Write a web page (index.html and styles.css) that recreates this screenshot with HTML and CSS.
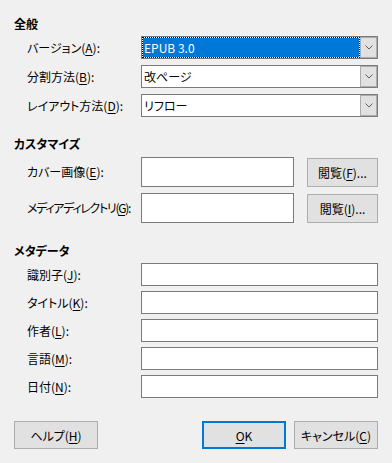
FILE: index.html
```html
<!DOCTYPE html>
<html lang="ja">
<head>
  <meta charset="UTF-8" />
  <meta name="viewport" content="width=device-width, initial-scale=1.0" />
  <title>EPUB エクスポート</title>
  <link rel="stylesheet" href="styles.css">
</head>
<body>
  <div class="dialog">
    <!-- 全般 -->
    <div class="section general">
      <div class="section-title">全般</div>
      <div class="rows combo-rows">
        <label class="row-label">バージョン(<u>A</u>):</label>
        <div class="combo">
          <span class="combo-value selected">EPUB 3.0</span>
          <span class="combo-btn"><svg width="8" height="5" viewBox="0 0 8 5"><path d="M0.5 0.5 L4 4 L7.5 0.5" fill="none" stroke="#606060" stroke-width="1"/></svg></span>
        </div>

        <label class="row-label">分割方法(<u>B</u>):</label>
        <div class="combo">
          <span class="combo-value">改ページ</span>
          <span class="combo-btn"><svg width="8" height="5" viewBox="0 0 8 5"><path d="M0.5 0.5 L4 4 L7.5 0.5" fill="none" stroke="#606060" stroke-width="1"/></svg></span>
        </div>

        <label class="row-label">レイアウト方法(<u>D</u>):</label>
        <div class="combo">
          <span class="combo-value">リフロー</span>
          <span class="combo-btn"><svg width="8" height="5" viewBox="0 0 8 5"><path d="M0.5 0.5 L4 4 L7.5 0.5" fill="none" stroke="#606060" stroke-width="1"/></svg></span>
        </div>
      </div>
    </div>

    <!-- カスタマイズ -->
    <div class="section custom">
      <div class="section-title">カスタマイズ</div>
      <div class="rows path-rows">
        <label class="row-label">カバー画像(<u>E</u>):</label>
        <input class="field tall" type="text" />
        <button class="btn browse">閲覧(<u>F</u>)...</button>

        <label class="row-label narrow">メディアディレクトリ(<u>G</u>):</label>
        <input class="field tall" type="text" />
        <button class="btn browse">閲覧(<u>I</u>)...</button>
      </div>
    </div>

    <!-- メタデータ -->
    <div class="section meta">
      <div class="section-title">メタデータ</div>
      <div class="rows meta-rows">
        <label class="row-label">識別子(<u>J</u>):</label>
        <input class="field" type="text" />
        <label class="row-label">タイトル(<u>K</u>):</label>
        <input class="field" type="text" />
        <label class="row-label">作者(<u>L</u>):</label>
        <input class="field" type="text" />
        <label class="row-label">言語(<u>M</u>):</label>
        <input class="field" type="text" />
        <label class="row-label">日付(<u>N</u>):</label>
        <input class="field" type="text" />
      </div>
    </div>

    <div class="footer">
      <button class="btn">ヘルプ(<u>H</u>)</button>
      <button class="btn default"><u>O</u>K</button>
      <button class="btn">キャンセル(<u>C</u>)</button>
    </div>
  </div>
</body>
</html>
```

FILE: styles.css
```css
body {
  margin: 0;
  background: #f0f0f0;
  font-family: "Noto Sans CJK JP", "Noto Sans", sans-serif;
  font-size: 12px;
  color: #000;
  font-feature-settings: "palt";
}
.dialog {
  width: 392px;
  box-sizing: border-box;
  padding: 16px 14px 0;
}
.section-title {
  font-weight: bold;
  height: 16px;
  line-height: 16px;
}
.custom {
  margin-top: 19px;
}
.meta {
  margin-top: 20px;
}
.rows {
  display: grid;
  grid-template-columns: 114px 1fr;
  align-items: center;
  padding-left: 13px;
}
.row-label {
  line-height: 16px;
  white-space: nowrap;
}
.row-label.narrow {
  letter-spacing: -1.3px;
}
u {
  text-decoration-thickness: 1px;
  text-underline-offset: 2px;
}
.combo-rows {
  margin-top: 4px;
  row-gap: 6px;
}
.combo {
  display: flex;
  height: 23px;
  box-sizing: border-box;
  border: 1px solid #7a7a7a;
  background: #fff;
}
.combo-value {
  flex: 1;
  line-height: 21px;
  padding-left: 2px;
  box-sizing: border-box;
}
.combo-value.selected {
  background: #0078d7;
  background-clip: padding-box;
  color: #fff;
  border: 1px dotted #000;
  line-height: 19px;
  padding-left: 1px;
}
.combo-btn {
  width: 17px;
  box-sizing: border-box;
  border: 1px solid #adadad;
  background: #e1e1e1;
  display: flex;
  align-items: center;
  justify-content: center;
}
.path-rows {
  grid-template-columns: 114px 153px 1fr;
  margin-top: 5px;
  row-gap: 6px;
}
.field {
  display: block;
  margin: 0;
  width: 100%;
  height: 23px;
  box-sizing: border-box;
  border: 1px solid #7a7a7a;
  background: #fff;
  font: inherit;
  outline: none;
}
.field.tall {
  height: 30px;
}
.meta-rows {
  margin-top: 4px;
  row-gap: 5px;
}
.btn {
  height: 28px;
  width: 84px;
  box-sizing: border-box;
  border: 1px solid #adadad;
  background: #e1e1e1;
  font: inherit;
  font-feature-settings: "palt";
  color: #000;
  padding: 0;
  cursor: default;
}
.browse {
  width: 71px;
  height: 29px;
  margin-left: 13px;
  align-self: end;
}
.footer {
  display: flex;
  gap: 8px;
  margin-top: 23px;
}
.footer .default {
  margin-left: auto;
  border: 2px solid #0078d7;
}
```
